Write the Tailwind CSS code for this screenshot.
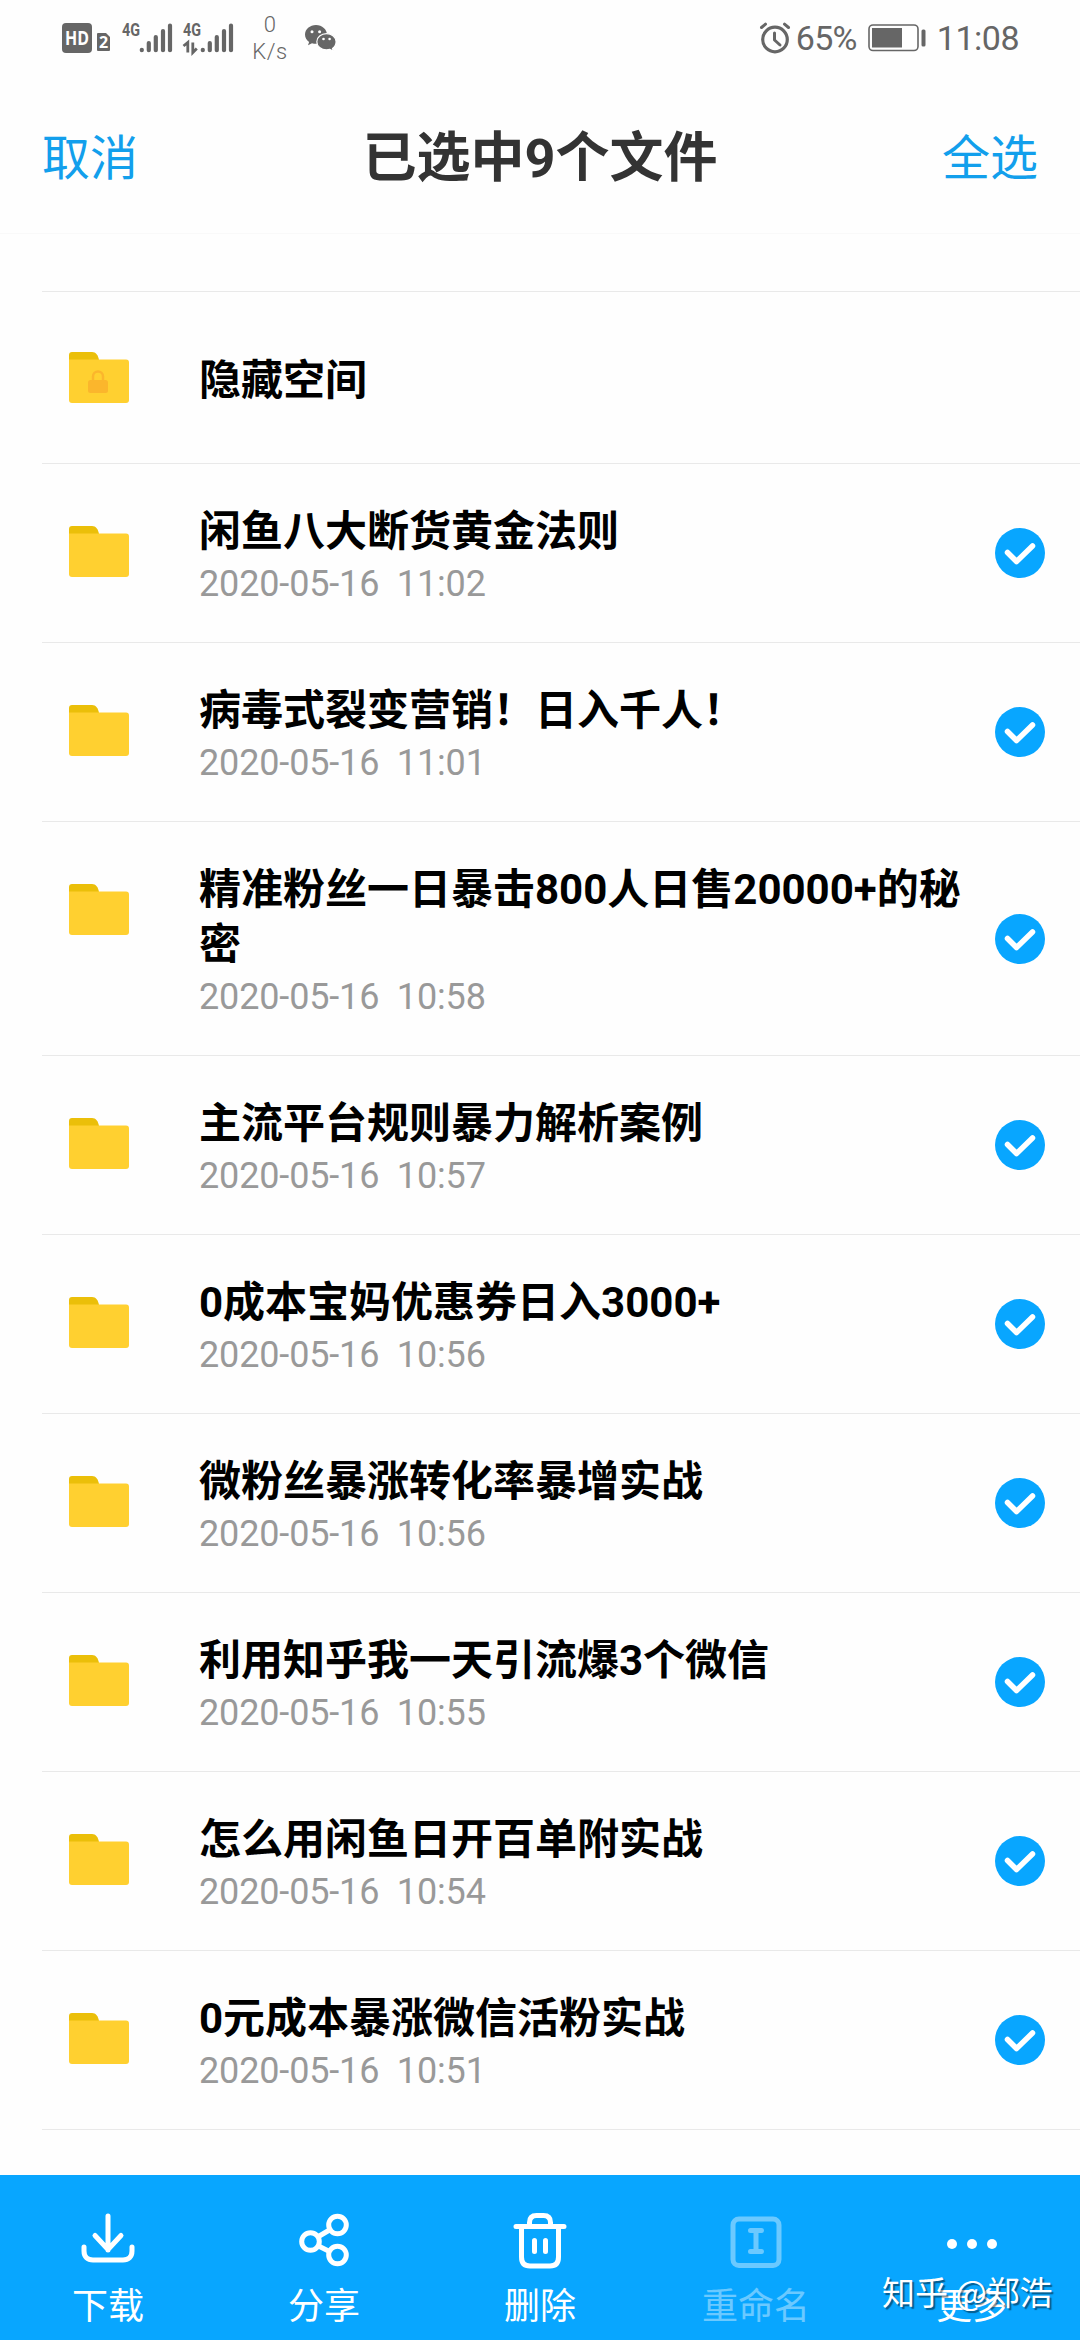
<!DOCTYPE html>
<html lang="zh-CN">
<head>
<meta charset="utf-8">
<title>已选中9个文件</title>
<script src="https://cdn.jsdelivr.net/npm/@tailwindcss/browser@4"></script>
</head>
<body class="bg-white">
<div class="relative w-[1080px] h-[2340px] overflow-hidden bg-[#fefefe] flex flex-col font-[Roboto,'Noto_Sans_CJK_SC',sans-serif]">

  <!-- status bar -->
  <div class="h-[76px] shrink-0 flex items-center justify-between pl-[62px] pr-[61px] text-[#666]">
    <div class="flex items-center h-full">
      <svg class="overflow-visible" width="30" height="30" viewBox="0 0 30 30"><rect width="30" height="30" rx="4" fill="#666"/><text x="15" y="22" text-anchor="middle" font-family="Open Sans" font-weight="700" font-size="19" textLength="24" lengthAdjust="spacingAndGlyphs" fill="#fff">HD</text></svg>
      <svg class="ml-[5px] mt-[7px] overflow-visible" width="13" height="18" viewBox="0 0 13 18"><path d="M1 0H9L13 4V17a1 1 0 0 1-1 1H1a1 1 0 0 1-1-1V1a1 1 0 0 1 1-1Z" fill="#666"/><text x="6.5" y="15" text-anchor="middle" font-family="Open Sans" font-weight="700" font-size="16" fill="#fff">2</text></svg>
      <svg class="ml-[12px] overflow-visible" width="51" height="32" viewBox="0 0 51 32">
        <text x="0" y="14" font-family="Roboto" font-weight="700" font-size="19" textLength="18" lengthAdjust="spacingAndGlyphs" fill="#666">4G</text>
        <g stroke="#666" stroke-width="4.2" stroke-linecap="round"><path d="M19.8 28.2v-.4M26.8 28.2V21M33.8 28.2V15M41 28.2V9M48 28.2V3.500"/></g>
      </svg>
      <svg class="ml-[10px] overflow-visible" width="51" height="32" viewBox="0 0 51 32">
        <text x="0" y="14" font-family="Roboto" font-weight="700" font-size="19" textLength="18" lengthAdjust="spacingAndGlyphs" fill="#666">4G</text>
        <path d="M0.500 24 4.800 20.500v10M9.800 20.500v10L13.800 26.500" fill="none" stroke="#666" stroke-width="2.800"/>
        <g stroke="#666" stroke-width="4.2" stroke-linecap="round"><path d="M19.800 28.200v-.4M26.800 28.200V21M33.800 28.200V15M41 28.200V9M48 28.200V3.500"/></g>
      </svg>
      <div class="ml-[18px] w-[36px] text-center text-[22px] leading-[27px] font-light tracking-[0.5px]">0<br>K/s</div>
      <svg class="ml-[17px]" width="32" height="27" viewBox="0 0 32 27">
        <path d="M11 0C4.900 0 0 4.300 0 9.600c0 3 1.600 5.600 4.100 7.400L3 20.200l4-2c1.300.4 2.600.6 4 .6 6.100 0 11-4.100 11-9.200S17.100 0 11 0Z" fill="#666"/>
        <path d="M21.500 8.600c-5.400 0-9.700 3.600-9.700 8.100s4.300 8.200 9.700 8.200c1.200 0 2.300-.2 3.400-.5l3.500 1.900-.9-2.900c2.200-1.500 3.600-3.900 3.600-6.700 0-4.500-4.300-8.100-9.600-8.100Z" fill="#666" stroke="#fff" stroke-width="1.200"/>
        <g fill="#fff"><circle cx="7" cy="6.700" r="1.500"/><circle cx="14.600" cy="6.700" r="1.500"/><circle cx="18.500" cy="14" r="1.300"/><circle cx="24.600" cy="14" r="1.300"/></g>
      </svg>
    </div>
    <div class="flex items-center h-full text-[34px] leading-none">
      <svg width="32" height="32" viewBox="0 0 32 32" fill="none" stroke="#666" stroke-linecap="round"><circle cx="16" cy="17.500" r="12.300" stroke-width="3.200"/><path d="M15.500 11v7l5.500 5" stroke-width="3" stroke-linejoin="round"/><path d="M2.500 5.500 6.500 2.200M29.500 5.500 25.500 2.200" stroke-width="3"/></svg>
      <span class="ml-[5px] w-[63px] tracking-[-0.8px]">65%</span>
      <svg class="ml-[9px]" width="59" height="28" viewBox="0 0 59 28"><rect x="1" y="1" width="49" height="25.500" rx="4" fill="none" stroke="#666" stroke-width="1.600"/><rect x="4" y="4" width="30" height="19.500" fill="#666"/><rect x="53.500" y="5.500" width="4" height="17" rx="1.500" fill="#666"/></svg>
      <span class="ml-[10px] tracking-[-0.5px]">11:08</span>
    </div>
  </div>

  <!-- header -->
  <div class="h-[158px] shrink-0 flex items-center justify-between px-[42px] pt-[8px] border-b border-[#f9f9f9]">
    <span class="text-5xl leading-[72px] text-[#129fec]">取消</span>
    <span class="text-[54px] leading-[72px] font-bold text-[#333]">已选中9个文件</span>
    <span class="text-5xl leading-[72px] text-[#129fec]">全选</span>
  </div>
  <div class="h-[57px] shrink-0"></div>

  <!-- file list -->
  <div id="list" class="flex-1 pl-[42px]"></div>

  <!-- action bar -->
  <div class="h-[165px] shrink-0 bg-[#08a6ff] grid grid-cols-5 text-white text-[36px] leading-[50px]">
    <div class="flex flex-col items-center pt-[34px]">
      <svg width="64" height="64" viewBox="0 0 64 64" fill="none" stroke="#fff" stroke-width="5" stroke-linecap="round" stroke-linejoin="round"><path d="M32 7v34M19 26.500 32 40.500 45 26.500"/><path d="M8 38v4c0 6 3.500 9 9 9h30c5.500 0 9-3 9-9v-4"/></svg>
      <span class="mt-[9px]">下载</span>
    </div>
    <div class="flex flex-col items-center pt-[34px]">
      <svg width="64" height="64" viewBox="0 0 64 64" fill="none" stroke="#fff" stroke-width="5"><circle cx="18.500" cy="32.500" r="8.800"/><circle cx="45.500" cy="16" r="8.800"/><circle cx="45.500" cy="46" r="8.800"/><path d="M26.500 27.500 37.500 21M26.500 37 37.500 42.500"/></svg>
      <span class="mt-[9px]">分享</span>
    </div>
    <div class="flex flex-col items-center pt-[34px]">
      <svg width="64" height="64" viewBox="0 0 64 64" fill="none" stroke="#fff" stroke-width="5" stroke-linecap="round"><path d="M8 17.500h48M21.500 17v-3.500c0-5 2.500-7 7-7h7c4.500 0 7 2 7 7V17M13.500 18v30c0 6 2.500 9 8.500 9h20c6 0 8.500-3 8.500-9V18"/><path d="M26.500 31.500v11M37.500 31.500v11"/></svg>
      <span class="mt-[9px]">删除</span>
    </div>
    <div class="flex flex-col items-center pt-[34px] opacity-40">
      <svg width="64" height="64" viewBox="0 0 64 64" fill="none" stroke="#fff" stroke-width="5" stroke-linecap="round"><rect x="9" y="10" width="46" height="46.500" rx="6"/><path d="M26.500 21.500h11M32 21.500v21M26.500 42.500h11"/></svg>
      <span class="mt-[9px]">重命名</span>
    </div>
    <div class="flex flex-col items-center pt-[34px]">
      <svg width="64" height="64" viewBox="0 0 64 64" fill="#fff"><circle cx="12" cy="35" r="5"/><circle cx="32" cy="35" r="5"/><circle cx="52" cy="35" r="5"/></svg>
      <span class="mt-[9px]">更多</span>
    </div>
  </div>

  <!-- watermark -->
  <div class="absolute left-[882px] top-[2267px] text-[33px] leading-[48px] whitespace-nowrap text-white font-['Noto_Sans_CJK_SC',sans-serif] [text-shadow:2px_2px_1px_rgba(0,0,0,0.45)]">知乎 @郑浩</div>
</div>

<script>
const files = [
  ['闲鱼八大断货黄金法则', '11:02'],
  ['病毒式裂变营销！日入千人！', '11:01'],
  ['精准粉丝一日暴击800人日售20000+的秘密', '10:58'],
  ['主流平台规则暴力解析案例', '10:57'],
  ['0成本宝妈优惠券日入3000+', '10:56'],
  ['微粉丝暴涨转化率暴增实战', '10:56'],
  ['利用知乎我一天引流爆3个微信', '10:55'],
  ['怎么用闲鱼日开百单附实战', '10:54'],
  ['0元成本暴涨微信活粉实战', '10:51'],
];
const folder = (extra = '') => `<svg width="60" height="51" viewBox="0 0 60 51" class="shrink-0"><path d="M3 0H23c4 0 6 3 7 8v6H0V3a3 3 0 0 1 3-3Z" fill="#ebbf09"/><path d="M0 7.500H57a3 3 0 0 1 3 3V48a3 3 0 0 1-3 3H3a3 3 0 0 1-3-3Z" fill="#ffd030"/>${extra}</svg>`;
const lock = '<rect x="19" y="28" width="20" height="13" rx="2.500" fill="#fbb62c"/><path d="M24 29v-4.500a5 5 0 0 1 10 0V29" fill="none" stroke="#fbb62c" stroke-width="2.500"/>';
const check = '<svg width="50" height="50" viewBox="0 0 50 50" class="shrink-0 self-center"><circle cx="25" cy="25" r="25" fill="#08a6ff"/><path d="M12.500 24.500 21.500 33.500 37.500 18" fill="none" stroke="#fff" stroke-width="5.500" stroke-linecap="round" stroke-linejoin="round"/></svg>';
document.getElementById('list').innerHTML =
  `<div class="h-[173px] border-y border-[#e9e9e9] flex pl-[27px] pt-[60px]">${folder(lock)}<div class="ml-[70px] mt-[1px] text-[42px] leading-[55px] font-bold text-black">隐藏空间</div></div>` +
  files.map(([name, time]) => `<div class="flex border-b border-[#e9e9e9] pl-[27px] pr-[35px]">
    <div class="pt-[62px]">${folder()}</div>
    <div class="ml-[70px] flex-1 pt-[40px] pb-[32px]">
      <div class="w-[770px] text-[42px] leading-[55px] font-bold text-black break-all">${name}</div>
      <div class="text-[36px] leading-[51px] text-[#999] whitespace-pre tracking-[-0.15px]">2020-05-16  ${time}</div>
    </div>${check}</div>`).join('');
</script>
</body>
</html>
